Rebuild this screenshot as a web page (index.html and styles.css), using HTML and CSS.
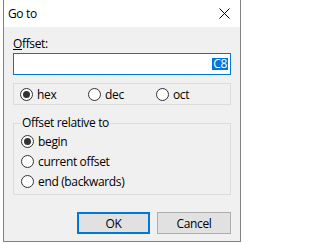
FILE: index.html
```html
<!DOCTYPE html>
<html>
<head>
<meta charset="utf-8">
<link rel="stylesheet" href="styles.css">
</head>
<body>
<div class="window">
  <div class="titlebar">
    <span class="title">Go to</span>
    <svg class="close" width="11" height="11" viewBox="0 0 11 11"><path d="M0.5 0.5 L10.5 10.5 M10.5 0.5 L0.5 10.5" stroke="#000" stroke-width="1" fill="none"/></svg>
  </div>
  <div class="client">
    <div class="label"><u>O</u>ffset:</div>
    <div class="input"><span class="sel">C8</span></div>
    <div class="radiobox">
      <span class="radio checked"><i class="dot"></i>hex</span>
      <span class="radio"><i class="dot"></i>dec</span>
      <span class="radio"><i class="dot"></i>oct</span>
    </div>
    <fieldset class="group">
      <legend class="legend">Offset relative to</legend>
      <div class="row radio checked"><i class="dot"></i>begin</div>
      <div class="row radio"><i class="dot"></i>current offset</div>
      <div class="row radio"><i class="dot"></i>end (backwards)</div>
    </fieldset>
    <div class="buttons">
      <button class="btn btn-default">OK</button>
      <button class="btn btn-cancel">Cancel</button>
    </div>
  </div>
</div>
</body>
</html>
```
FILE: styles.css
```css
html, body {
  margin: 0;
  padding: 0;
  background: #ffffff;
}
body {
  font-family: "Open Sans", "Noto Sans", sans-serif;
  font-size: 12px;
  letter-spacing: -0.35px;
  color: #000;
}
.window {
  margin-left: 3px;
  width: 238px;
  height: 242px;
  box-sizing: border-box;
  border: 1px solid #828282;
  border-top: none;
  display: flex;
  flex-direction: column;
}
.titlebar {
  height: 27px;
  flex: none;
  background: #fff;
  display: flex;
  align-items: center;
  justify-content: space-between;
  padding: 0 10px 0 4px;
}
.title {
  font-size: 12px;
}
.close {
  display: block;
}
.client {
  flex: 1;
  background: #f0f0f0;
  padding: 9px 9px 0 9px;
  display: flex;
  flex-direction: column;
}
.label {
  height: 16px;
  line-height: 16px;
}
.input {
  margin-top: 1px;
  height: 22px;
  box-sizing: border-box;
  border: 1px solid #0078d7;
  background: #fff;
  display: flex;
  justify-content: flex-end;
  align-items: center;
  padding-right: 2px;
}
.sel {
  background: #0078d7;
  color: #fff;
  line-height: 12px;
  height: 12px;
  padding: 0 1px;
}
.radiobox {
  margin-top: 8px;
  height: 22px;
  box-sizing: border-box;
  border: 1px solid #dcdcdc;
  display: flex;
  align-items: center;
  padding-left: 6px;
}
.radiobox .radio {
  width: 68px;
}
.radio {
  display: flex;
  align-items: center;
}
.dot {
  width: 13px;
  height: 13px;
  box-sizing: border-box;
  border: 1px solid #333;
  border-radius: 50%;
  background: #fff;
  margin-right: 4px;
  flex: none;
  display: flex;
  align-items: center;
  justify-content: center;
}
.checked .dot::after {
  content: "";
  width: 7px;
  height: 7px;
  border-radius: 50%;
  background: #333;
}
.group {
  margin: 10px 0 0 0;
  padding: 0 0 3px 7px;
  border: 1px solid #dcdcdc;
  min-width: 0;
}
.legend {
  padding: 0 1px;
  line-height: 16px;
}
.row {
  height: 20px;
}
.buttons {
  margin-top: 17px;
  display: flex;
  justify-content: flex-end;
  gap: 7px;
}
.btn {
  font-family: inherit;
  font-size: 12px;
  letter-spacing: inherit;
  color: #000;
  height: 22px;
  background: #e1e1e1;
  box-sizing: border-box;
  padding: 0;
  margin: 0;
}
.btn-default {
  width: 73px;
  border: 2px solid #0078d7;
}
.btn-cancel {
  width: 74px;
  border: 1px solid #adadad;
}
```
